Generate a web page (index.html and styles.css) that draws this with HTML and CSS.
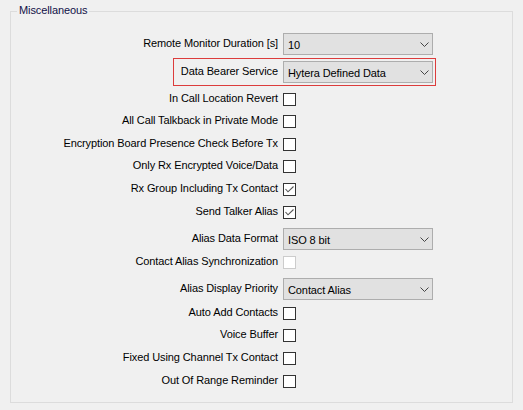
FILE: index.html
```html
<!DOCTYPE html>
<html>
<head>
<meta charset="utf-8">
<link rel="stylesheet" href="styles.css">
</head>
<body>
<fieldset class="group">
  <legend class="group-title">Miscellaneous</legend>

  <div class="row combo-row first">
    <span class="label">Remote Monitor Duration [s]</span>
    <div class="combo"><span class="value">10</span><svg class="chev" width="9" height="5" viewBox="0 0 9 5"><polyline points="0.5,0.5 4.5,4.5 8.5,0.5" fill="none" stroke="#444" stroke-width="1"/></svg></div>
  </div>

  <div class="row combo-row hl m3">
    <span class="label">Data Bearer Service</span>
    <div class="combo"><span class="value">Hytera Defined Data</span><svg class="chev" width="9" height="5" viewBox="0 0 9 5"><polyline points="0.5,0.5 4.5,4.5 8.5,0.5" fill="none" stroke="#444" stroke-width="1"/></svg></div>
  </div>

  <div class="row cb-row m7"><span class="label">In Call Location Revert</span><span class="cb"></span></div>
  <div class="row cb-row m9"><span class="label">All Call Talkback in Private Mode</span><span class="cb"></span></div>
  <div class="row cb-row m10"><span class="label">Encryption Board Presence Check Before Tx</span><span class="cb"></span></div>
  <div class="row cb-row m9"><span class="label">Only Rx Encrypted Voice/Data</span><span class="cb"></span></div>
  <div class="row cb-row m10"><span class="label">Rx Group Including Tx Contact</span><span class="cb"><svg width="13" height="13" viewBox="0 0 13 13"><polyline points="2.5,6 5,8.8 10.5,3.5" fill="none" stroke="#555" stroke-width="1.1"/></svg></span></div>
  <div class="row cb-row m10"><span class="label">Send Talker Alias</span><span class="cb"><svg width="13" height="13" viewBox="0 0 13 13"><polyline points="2.5,6 5,8.8 10.5,3.5" fill="none" stroke="#555" stroke-width="1.1"/></svg></span></div>

  <div class="row combo-row m9">
    <span class="label">Alias Data Format</span>
    <div class="combo"><span class="value">ISO 8 bit</span><svg class="chev" width="9" height="5" viewBox="0 0 9 5"><polyline points="0.5,0.5 4.5,4.5 8.5,0.5" fill="none" stroke="#444" stroke-width="1"/></svg></div>
  </div>

  <div class="row cb-row m6"><span class="label">Contact Alias Synchronization</span><span class="cb disabled"></span></div>

  <div class="row combo-row m9">
    <span class="label">Alias Display Priority</span>
    <div class="combo"><span class="value">Contact Alias</span><svg class="chev" width="9" height="5" viewBox="0 0 9 5"><polyline points="0.5,0.5 4.5,4.5 8.5,0.5" fill="none" stroke="#444" stroke-width="1"/></svg></div>
  </div>

  <div class="row cb-row m7"><span class="label">Auto Add Contacts</span><span class="cb"></span></div>
  <div class="row cb-row m9"><span class="label">Voice Buffer</span><span class="cb"></span></div>
  <div class="row cb-row m10"><span class="label">Fixed Using Channel Tx Contact</span><span class="cb"></span></div>
  <div class="row cb-row m10"><span class="label">Out Of Range Reminder</span><span class="cb"></span></div>
</fieldset>
</body>
</html>
```

FILE: styles.css
```css
html, body {
  margin: 0;
  padding: 0;
  background: #f0f0f0;
}
body {
  width: 523px;
  height: 410px;
  overflow: hidden;
  font-family: "Liberation Sans", Arial, sans-serif;
  font-size: 11px;
  letter-spacing: -0.1px;
  color: #000;
}
.group {
  box-sizing: border-box;
  margin: 4px 10px 0 10px;
  width: 503px;
  height: 399px;
  padding: 14px 0 0 0;
  border: 1px solid #dcdcdc;
  min-width: 0;
}
.group-title {
  margin-left: 6px;
  padding: 0 2px 2px 2px;
  line-height: 13px;
  color: #101048;
}
.row {
  display: flex;
  align-items: center;
}
.combo-row { height: 22px; }
.cb-row { height: 13px; }
.label {
  width: 267px;
  margin-right: 5px;
  text-align: right;
  white-space: nowrap;
  line-height: 13px;
  padding-bottom: 2px;
}
.m3 { margin-top: 3px; }
.m6 { margin-top: 6px; }
.m7 { margin-top: 7px; }
.m9 { margin-top: 9px; }
.m10 { margin-top: 10px; }
.hl {
  box-sizing: border-box;
  margin-left: 162px;
  width: 263px;
  height: 28px;
  padding: 2px 2px 2px 0;
  border: 1px solid #dc3c3c;
}
.hl .label { width: 104px; }
.combo {
  box-sizing: border-box;
  width: 150px;
  height: 22px;
  border: 1px solid #adadad;
  background: #e1e1e1;
  display: flex;
  align-items: center;
  justify-content: space-between;
  padding: 0 3px 0 4px;
}
.value {
  line-height: 20px;
  padding-top: 1px;
  white-space: nowrap;
}
.chev { display: block; }
.cb {
  box-sizing: border-box;
  width: 13px;
  height: 13px;
  border: 1px solid #333;
  background: #fff;
  display: block;
  flex: none;
}
.cb svg { display: block; margin: -1px; }
.cb.disabled { border-color: #cccccc; }
```
